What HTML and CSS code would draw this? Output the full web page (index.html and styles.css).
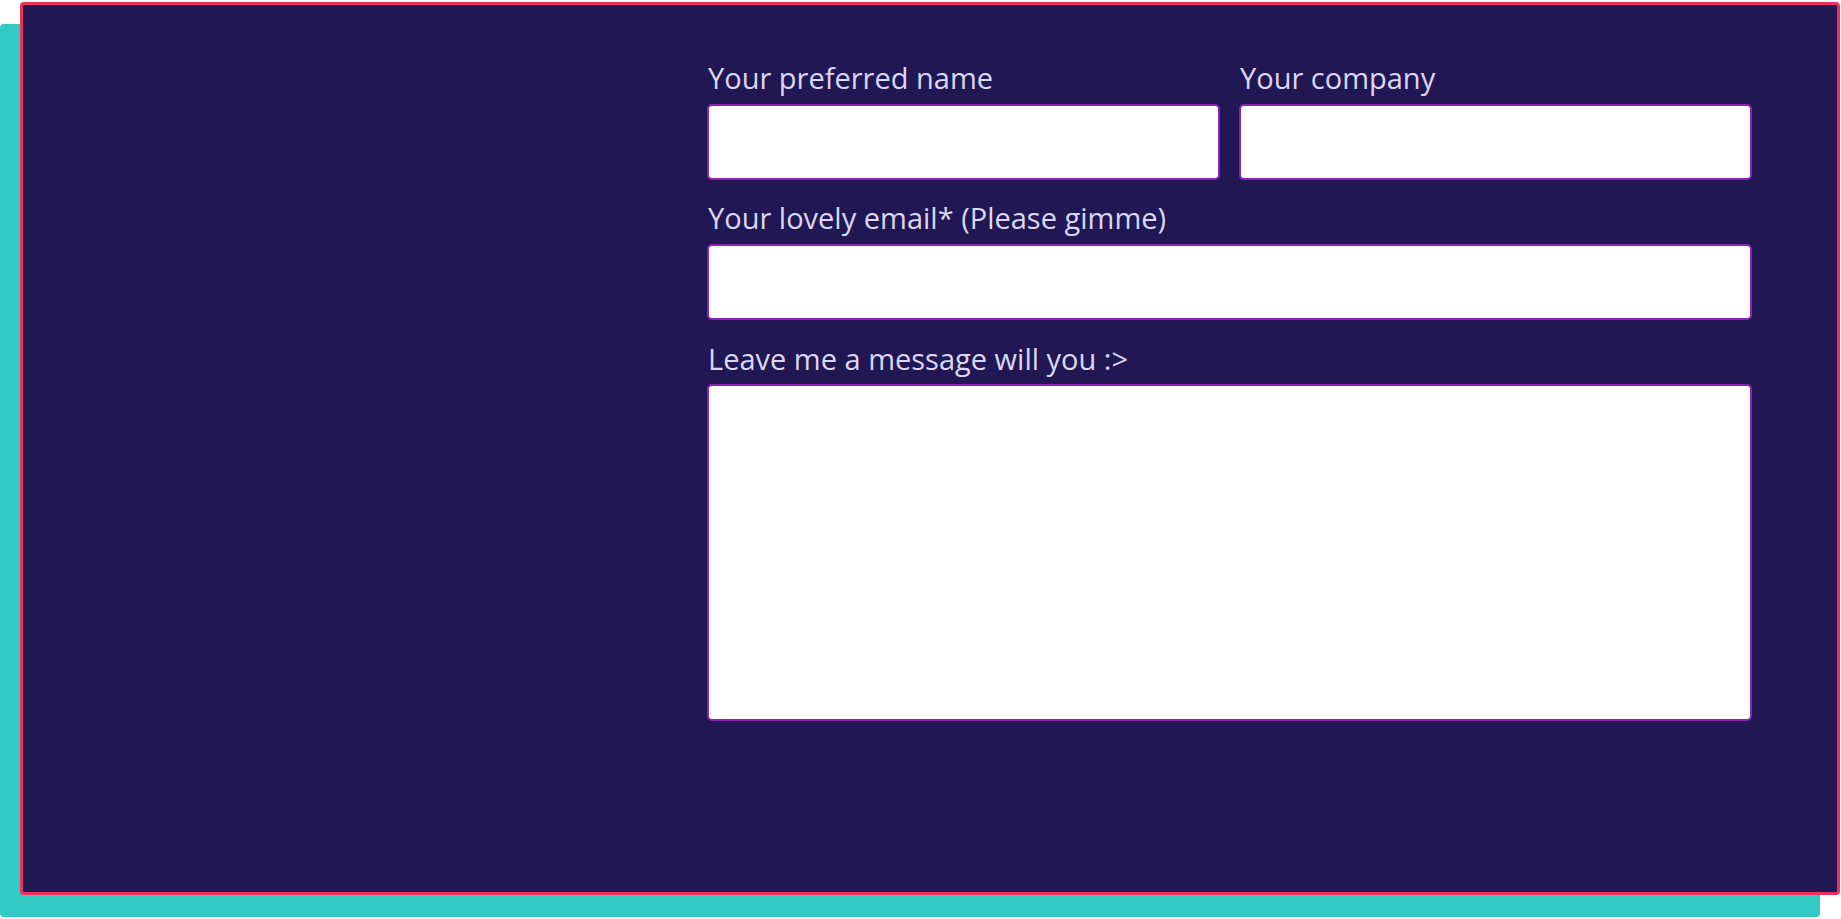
FILE: index.html
```html
<!DOCTYPE html>
<html lang="en">
<head>
    <meta charset="UTF-8">
    <meta name="viewport" content="width=device-width, initial-scale=1.0">
    <title>Contact</title>
    <link rel="stylesheet" href="styles.css">
</head>
<body>
    <div class="contact-card">
        <form class="contact-form">
            <div class="field">
                <label for="name">Your preferred name</label>
                <input type="text" id="name">
            </div>
            <div class="field">
                <label for="company">Your company</label>
                <input type="text" id="company">
            </div>
            <div class="field wide">
                <label for="email">Your lovely email* (Please gimme)</label>
                <input type="email" id="email">
            </div>
            <div class="field wide">
                <label for="message">Leave me a message will you :&gt;</label>
                <textarea id="message"></textarea>
            </div>
        </form>
    </div>
</body>
</html>
```

FILE: styles.css
```css
body {
    margin: 0;
    padding: 2px 1px 24px 20px;
    font-family: 'Open Sans', Lato, sans-serif;
    background-color: #fff;
}
.contact-card {
    box-sizing: border-box;
    height: 893px;
    padding: 56px 85px 0 684px;
    background-color: #211853;
    border: 3px solid #f2305f;
    border-radius: 4px;
    box-shadow: -20px 22px 0 #33cac4;
}
.contact-form {
    display: grid;
    grid-template-columns: 1fr 1fr;
    column-gap: 19px;
    row-gap: 21.5px;
}
.field.wide {
    grid-column: 1 / -1;
}
label {
    display: block;
    margin-bottom: 8px;
    padding-left: 1px;
    font-size: 29px;
    line-height: 1.2;
    color: #dcd6f7;
}
input, textarea {
    display: block;
    width: 100%;
    height: 76px;
    box-sizing: border-box;
    border: 2px solid #8e22b4;
    border-radius: 5px;
    background-color: #fff;
    font: inherit;
    resize: none;
}
textarea {
    height: 337px;
}
```
